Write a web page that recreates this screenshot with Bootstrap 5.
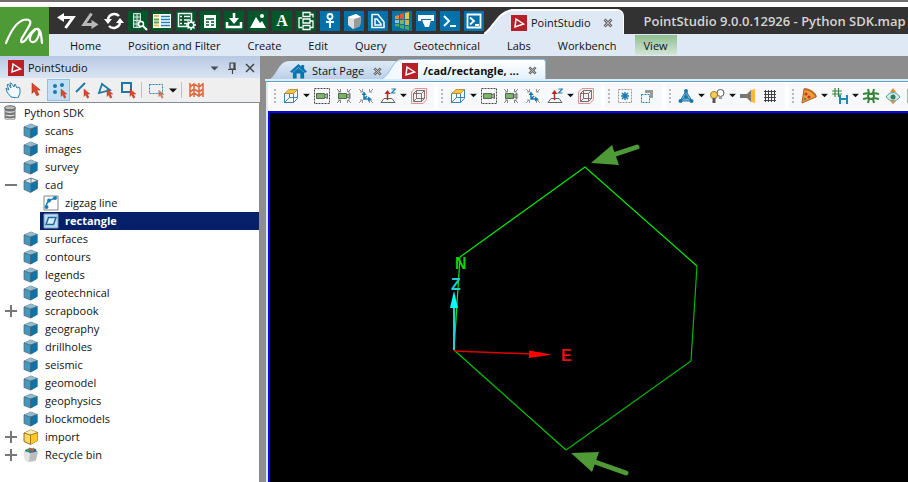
<!DOCTYPE html>
<html lang="en">
<head>
<meta charset="utf-8">
<meta name="viewport" content="width=device-width, initial-scale=1">
<title>PointStudio 9.0.0.12926 - Python SDK.map</title>
<link href="https://cdn.jsdelivr.net/npm/bootstrap@5.3.0/dist/css/bootstrap.min.css" rel="stylesheet">
<style>
body{font:11px/18px "Open Sans","Noto Sans",sans-serif;color:#111;background:#fff;overflow:hidden}
button{border:0;background:none;padding:0;color:inherit;font:inherit;display:inline-flex;align-items:center;justify-content:center;flex:none}
svg{display:block;flex:none}
a{color:inherit;text-decoration:none}
.top-edge{height:7px;border-top:2px solid #6d6d6d;background:#fff}
.app-logo{width:49px;height:49px;background:#4d9a36}
.title-bar{height:27px;background:#323232}
.quick{padding-left:7px;gap:4px}
.quick button{width:20px;height:20px}
.q-green{background:#00582a}
.q-blue{background:#0072ab}
.serif-a{font:700 16px/20px "Liberation Serif",serif;color:#fff}
.app-tab{height:25px;background:#dfe8f5;border-top:2px solid #fff;border-right:1px solid #fff;border-top-right-radius:7px;padding-right:10px;margin-left:-3px;gap:4px}
.app-title{font-size:13px;font-weight:600;color:#d4d4d4;margin-left:20px}
.menu-bar{height:22px;background:#dfe8f5;padding:0 8px 1px;gap:1px}
.menu-bar a{padding:2px 13px 0;line-height:18px}
.menu-bar a.current{margin:0 4px;padding:2px 9px 0;background:linear-gradient(#8fbf8f,#d3e6d8)}
.side{width:260px;background:#efefef}
.side-head{height:22px;background:linear-gradient(#b7c9e3,#dae4f3);padding:2px 5px 0 8px;gap:4px}
.side-tools{height:25px;padding-left:1px;border-bottom:1px solid #838b93}
.side-tools button{width:23px;height:22px}
.side-tools button.drop{width:12px}
.side-tools .picked{background:#c3dff5;border:1px solid #8cc0ea}
.rule{width:1px;height:16px;margin:0 2px;background:#c0c0c0;flex:none}
.tree{background:#fff;padding-top:1px;border-right:1px solid #8d8d8d}
.tree ul{list-style:none;margin:0;padding:0}
.tree-row{height:18px;padding-left:3px}
.tree-row button,.slot{width:15px;height:15px;margin-right:5px;flex:none}
.tree-row .name{margin-left:6px}
.child{margin-left:40px}
.child.chosen{background:#07206a;color:#fff;font-weight:700}
.split{width:5px;background:#8d8d8d}
.work{background:#8d8d8d}
.doc-tabs{height:25px;padding-left:5px;border-bottom:2px solid #dcecf9}
.doc-tab{height:18px;background:linear-gradient(#dfeaf6,#b9d0ea);gap:5px;padding:2px 20px 0 0}
.doc-slope{margin-left:-20px;z-index:1}
.doc-tab.front{height:20px;background:linear-gradient(#fff,#e3f1fc);border-top:1px solid #8cc0e4;border-right:1px solid #8cc0e4;border-top-right-radius:3px;font-weight:700;padding-right:8px}
.doc-frame{border-top:1px solid #5f9fc9;border-left:1px solid #5f9fc9;background:#fff;box-shadow:inset 2px 0 #d5e9f8}
.view-tools{height:29px;padding:0 0 2px 5px;gap:4px}
.tool-group{height:26px;background:#f7f8fa;border-radius:3px;padding-left:3px;flex:none}
.tool-group button{width:22px;height:22px}
.tool-group button.drop{width:9px}
.grip{width:2px;height:14px;margin-right:4px;background:repeating-linear-gradient(#b9b9b9 0 2px,transparent 2px 4px)}
.viewport{background:#000;border-left:2px solid #00f;border-top:2px solid #00f;margin-left:2px;min-height:0}
.viewport text{font:700 16px "Liberation Sans",sans-serif}
</style>
<script src="https://cdn.jsdelivr.net/npm/bootstrap@5.3.0/dist/js/bootstrap.bundle.min.js"></script>
</head>
<body class="vh-100 d-flex flex-column">
<svg width="0" height="0" class="position-absolute" aria-hidden="true">
<defs>
<symbol id="cube" viewBox="0 0 16 16"><path d="M8 1l6 2.500v8L7.500 15 1 12.500V4z" fill="#4796bb" stroke="#55646c" stroke-width=".7"/><path d="M8 1l6 2.500-6.500 2.500L1 4z" fill="#8ebdd3"/><path d="M14.500 3.500v8L7.500 15.500V6z" fill="#0f73a6"/><path d="M1 4l6.500 2 7-2.500M7.500 6v9" fill="none" stroke="#4b6470" stroke-width=".8"/></symbol>
<symbol id="cubeopen" viewBox="0 0 16 16"><path d="M1 4l6.500 2.500 7-3v8l-7 4-6.500-3z" fill="#4796bb"/><path d="M14.500 3.500v8l-7 4V6.500z" fill="#0f73a6"/><path d="M8 1l6.500 2.500-7 3L1 4z" fill="#dcebf2" stroke="#4b6470" stroke-width=".8"/><path d="M8 1v5.300" stroke="#4b6470" stroke-width=".8"/><path d="M1 4v8.500l6.500 3 7-4v-8" fill="none" stroke="#55646c" stroke-width=".7"/></symbol>
<symbol id="cubeyellow" viewBox="0 0 16 16"><path d="M8 1l6.500 2.500v8l-7 4-6.500-3V4z" fill="#fcd860" stroke="#80611b" stroke-width=".9"/><path d="M8 1l6.500 2.500-7 2.500L1 4z" fill="#ffecab"/><path d="M14.500 3.500v8l-7 4V6z" fill="#fdc72c"/><path d="M1 4l6.500 2 7-2.500M7.500 6v9" fill="none" stroke="#80611b" stroke-width=".8"/></symbol>
<symbol id="database" viewBox="0 0 14 16"><path d="M1 3v10.500c0 2 11 2 11 0V3" fill="#777"/><path d="M2 6.500c2 1 7 1 9 0M2 10c2 1 7 1 9 0M2 13.300c2 1 7 1 9 0" fill="none" stroke="#e2e2e2" stroke-width="1.300"/><ellipse cx="6.500" cy="2.800" rx="5.500" ry="2" fill="#bbb" stroke="#666"/></symbol>
<symbol id="bin" viewBox="0 0 16 16"><path d="M2 3l5-2 6 1 1 3-6 2-6-2z" fill="#19799f"/><path d="M6 1l3 3M11 1l-2 3" stroke="#e55226" stroke-width="1.500"/><path d="M4 2l2 3" stroke="#55a541" stroke-width="1.500"/><path d="M1 4l6 2 8-1.500-2 9L6 15l-4-2z" fill="#bdbdbd"/><path d="M1 4l6 2-1 9-4-2z" fill="#e4e4e4"/></symbol>
<symbol id="plus" viewBox="0 0 14 14"><path d="M7 1v12M1 7h12" stroke="#777" stroke-width="2"/></symbol>
<symbol id="minus" viewBox="0 0 14 14"><path d="M1 7h12" stroke="#777" stroke-width="2"/></symbol>
<symbol id="zigzag" viewBox="0 0 16 16"><path d="M1 1h14v14H1z" fill="#fff" stroke="#858585"/><path d="M3.500 12V9L6 5.500 12 3" fill="none" stroke="#247fb0" stroke-width="1.500"/><circle cx="3.500" cy="12" r="2" fill="#1680ba"/><circle cx="6" cy="5.500" r="2" fill="#1680ba"/><circle cx="12" cy="3" r="2" fill="#1680ba"/></symbol>
<symbol id="rectobj" viewBox="0 0 16 16"><path d="M1 1h14v14H1z" fill="#bcdcf4" stroke="#7c98ad"/><path d="M5.500 4.500H13L10.500 11.500H3z" fill="#d8ecfa" stroke="#1c6ca4" stroke-width="1.500"/></symbol>
<symbol id="studio" viewBox="0 0 16 16"><path d="M0 0h16v16H0z" fill="#b91f27"/><path d="M5 4l7.500 5L4 12z" fill="none" stroke="#fff" stroke-width="1.500"/></symbol>
<symbol id="close" viewBox="0 0 10 10"><path d="M1.500 1.500l7 7M8.500 1.500l-7 7" stroke="#6c6c6c" stroke-width="3"/><path d="M2 2l6 6M8 2L2 8" stroke="#c7c7c7" stroke-width=".9"/></symbol>
<symbol id="caret" viewBox="0 0 8 5"><path d="M0 .500h8L4 4.500z" fill="#111"/></symbol>
<symbol id="redpointer" viewBox="0 0 8 12"><path d="M1 0v9l2-2 2 4 2-1-2-4h3z" fill="#d9472c" stroke="#a43625" stroke-width=".5"/></symbol>
<symbol id="vcube" viewBox="0 0 16 16"><path d="M1.500 5.500h9v9h-9zM10.500 14.500l4-4v-9M1.500 14.500l5-5h8M6.500 2v7.500" fill="none" stroke="#3985b5"/><path d="M6 1.500h8.500l-4 4h-9z" fill="#fac338" stroke="#ad8738" stroke-width=".8"/></symbol>
<symbol id="fitcam" viewBox="0 0 16 16"><path d="M.500.500h15v15H.500z" fill="none" stroke="#444" stroke-dasharray="2 1"/><path d="M2.500 5.500h8v5h-8z" fill="#79b662" stroke="#58635a"/><path d="M10.500 7l3-1.500v5l-3-1.500" fill="#aaa" stroke="#666"/></symbol>
<symbol id="cornercam" viewBox="0 0 16 16"><path d="M1 1l3 3M2 4h2.500V1M15 1l-3 3M14 4h-2.500V1M1 15l3-3M2 12h2.500v3M15 15l-3-3M14 12h-2.500v3" fill="none" stroke="#8a8a8a"/><path d="M2.500 5.500h8v5h-8z" fill="#79b662" stroke="#58635a"/><path d="M11 7l3-1.500v5L11 9" fill="#aaa" stroke="#666"/></symbol>
<symbol id="corneraxis" viewBox="0 0 16 16"><path d="M1 1l3 3M2 4h2.500V1M15 1l-3 3M14 4h-2.500V1M1 15l3-3M2 12h2.500v3M15 15l-3-3M14 12h-2.500v3" fill="none" stroke="#949494"/><path d="M6 6v5h5M6 11l3-3" fill="none" stroke="#1779b1" stroke-width="1.500"/><path d="M3.500 7L6 3.500 8.500 7zM10 8.500l3.500 2.500-3.500 2.500z" fill="#1779b1"/></symbol>
<symbol id="zaxis" viewBox="0 0 16 16"><path d="M1 14.500h14l-3-4H4z" fill="#f4f4f4" stroke="#666"/><path d="M7.500 12V4" stroke="#b72729" stroke-width="1.500"/><path d="M4.500 6l3-4 3 4z" fill="#b72729"/><path d="M11.500 1h4l-4 4h4" fill="none" stroke="#227eb6" stroke-width="1.200"/></symbol>
<symbol id="wirecube" viewBox="0 0 16 16"><path d="M.500 4L4 .500h11.500v11L12 15.500H.500z" fill="#fbeeee" stroke="#dc9296"/><path d="M2.500 5.500h8v8h-8zM5.500 2.500h8v8h-8zM2.500 5.500l3-3M10.500 5.500l3-3M10.500 13.500l3-3M2.500 13.500l3-3" fill="none" stroke="#666" stroke-width=".9"/></symbol>
<symbol id="house" viewBox="0 0 18 16"><path d="M0 8l9-8 3 3V1h3v4l3 3-2 1.500-7-6-7 6z" fill="#0674ae"/><path d="M3 9l6-5 6 5v6.500h-4V10H7v5.500H3z" fill="#0674ae"/></symbol>
</defs></svg>

<div class="top-edge flex-shrink-0"></div>
<header class="d-flex flex-shrink-0">
<a class="app-logo flex-shrink-0" href="#" aria-label="Home page"><svg width="49" height="49" viewBox="0 0 49 49" fill="none" stroke="#fff" stroke-width="2.200" stroke-linecap="round"><path d="M6 36C10 26 17 13 26 12.500C32 12.500 31 17 28 21L22 31C19 37 24 36 27 31C31 25 35 21 38 22C42 23 41 31 42 36M38 22C41 26 37 36 32 35C28 34 30 27 35 23"/></svg></a>
<div class="flex-grow-1 overflow-hidden">
<div class="title-bar d-flex align-items-end text-nowrap">
<div class="quick d-flex align-items-center align-self-stretch">
<button aria-label="Undo"><svg width="20" height="20" viewBox="0 0 20 20"><path d="M6 6.500h11L9.500 17" fill="none" stroke="#fff" stroke-width="3"/><path d="M1 6.500L8 2v9z" fill="#fff"/></svg></button>
<button aria-label="Redo"><svg width="20" height="20" viewBox="0 0 20 20"><path d="M11.500 2.500L4 13.500h9" fill="none" stroke="#b8b8b8" stroke-width="3"/><path d="M18.500 13.500L11.500 9v9z" fill="#b8b8b8"/></svg></button>
<button aria-label="Refresh"><svg width="20" height="20" viewBox="0 0 20 20"><path d="M4 8a6.500 6.500 0 0 1 11-3M16 12a6.500 6.500 0 0 1-11 3" fill="none" stroke="#fff" stroke-width="2.500"/><path d="M0 8h8l-4 5zM12 12h8l-4-5z" fill="#fff"/></svg></button>
<button class="q-green" aria-label="Search grid"><svg width="20" height="20" viewBox="0 0 20 20"><path d="M5.500 2.500h7v14h-7zM9 2v14M5 6h8M5 9.500h8M5 13h8" fill="#3a7c58" stroke="#d6e5dc"/><circle cx="13" cy="13" r="2.500" fill="#00582a" stroke="#fff" stroke-width="1.500"/><path d="M15 15l4 4" stroke="#fff" stroke-width="2"/></svg></button>
<button class="q-green" aria-label="Table"><svg width="20" height="20" viewBox="0 0 20 20"><path d="M1 3h18v14H1z" fill="#fff"/><path d="M2 5h5M2 14.500h5" stroke="#e3c14a" stroke-width="2"/><path d="M2 8.500h5M2 11.500h5" stroke="#58a344" stroke-width="2"/><path d="M9 5.500h9M9 8.500h9M9 11.500h9M9 14.500h9" stroke="#2581ad" stroke-width="1.500"/></svg></button>
<button class="q-green" aria-label="Table settings"><svg width="20" height="20" viewBox="0 0 20 20"><path d="M2.500 2.500h13v13h-13zM4 5.500h2M8 5.500h6M4 9h2M8 9h6M4 12.500h2M8 12.500h4" fill="none" stroke="#fff" stroke-width="1.500"/><path d="M15 9v10M10 14h10M11.500 10.500l7 7M18.500 10.500l-7 7" stroke="#fff" stroke-width="1.500"/><circle cx="15" cy="14" r="2.800" fill="#00582a" stroke="#fff" stroke-width="1.500"/></svg></button>
<button class="q-green" aria-label="Sheet"><svg width="20" height="20" viewBox="0 0 20 20"><path d="M4 4h12v13H4z" fill="#fff"/><path d="M6 8h8M6 11h3M11 11h3M6 14h3M11 14h3" stroke="#00582a" stroke-width="1.500"/></svg></button>
<button class="q-green" aria-label="Import"><svg width="20" height="20" viewBox="0 0 20 20"><path d="M3 11v5h14v-5M10 2v8" fill="none" stroke="#fff" stroke-width="2.500"/><path d="M5 7h10l-5 6z" fill="#fff"/></svg></button>
<button class="q-green" aria-label="Terrain"><svg width="20" height="20" viewBox="0 0 20 20"><path d="M2 17l6-11 4 6 2-2 4 7z" fill="#fff"/><circle cx="14" cy="5" r="2" fill="#fff"/></svg></button>
<button class="q-green serif-a" aria-label="Text">A</button>
<button class="q-green" aria-label="Workflow"><svg width="20" height="20" viewBox="0 0 20 20"><path d="M7 1.500h7v4H7zM7 8h7v4H7zM7 14.500h7v4H7zM6 7H3v9.500h3M14 10h3v6.500h-3M14 3.500h3v3" fill="none" stroke="#fff" stroke-width="1.300"/></svg></button>
<button class="q-blue" aria-label="Pin"><svg width="20" height="20" viewBox="0 0 20 20"><circle cx="10" cy="5.500" r="2.500" fill="none" stroke="#fff" stroke-width="1.800"/><path d="M10 8v9M6 11h8" stroke="#fff" stroke-width="2"/></svg></button>
<button class="q-blue" aria-label="Block"><svg width="20" height="20" viewBox="0 0 20 20"><path d="M4 6l8-3 5 3-1 9-7 3-5-4z" fill="#ddd"/><path d="M4 6l6 2 7-2-5-3z" fill="#fff"/><path d="M10 8l7-2-1 9-6 3z" fill="#9a9a9a"/></svg></button>
<button class="q-blue" aria-label="Contour"><svg width="20" height="20" viewBox="0 0 20 20"><path d="M4 3.500h6L16 11v5.500H4zM7 8h2l4 5v1H7z" fill="none" stroke="#fff" stroke-width="1.500"/></svg></button>
<button class="q-blue" aria-label="Palette"><svg width="20" height="20" viewBox="0 0 20 20"><path d="M3 5l4-1v4H3z" fill="#e68a3a"/><path d="M8 3l4-1v6H8z" fill="#e95732"/><path d="M13 2l4-1v7h-4z" fill="#ecc92d"/><path d="M3 9h4v3H3z" fill="#8ec4d6"/><path d="M8 9h4v4H8z" fill="#81b35b"/><path d="M13 9h4v5h-4z" fill="#d3b23e"/><path d="M3 13h4v3l-4-1zM8 14h4v4l-4-1zM13 15h4v4l-4-1z" fill="#51a85d"/></svg></button>
<button class="q-blue" aria-label="Print"><svg width="20" height="20" viewBox="0 0 20 20"><path d="M2 4h16v6h-3V8H5v2H2zM6 9h9l-2 7H9z" fill="#fff"/></svg></button>
<button class="q-blue" aria-label="Console"><svg width="20" height="20" viewBox="0 0 20 20"><path d="M4 5l5 5-5 5M10 15h6" fill="none" stroke="#fff" stroke-width="2"/></svg></button>
<button class="q-blue" aria-label="Script window"><svg width="20" height="20" viewBox="0 0 20 20"><path d="M3.500 3.500h13v13h-13zM6 6.500L10 10l-4 3.500M11 14h4" fill="none" stroke="#fff" stroke-width="1.800"/></svg></button>
</div>
<svg width="30" height="25" viewBox="0 0 30 25"><path d="M0 25C10 19 14 1 30 1v24z" fill="#dfe8f5"/><path d="M0 25C10 19 14 1 30 1" fill="none" stroke="#fff" stroke-width="2"/></svg>
<div class="app-tab d-flex align-items-center"><svg width="16" height="16"><use href="#studio"/></svg><span>PointStudio</span><button class="ms-2" aria-label="Close PointStudio"><svg width="10" height="10"><use href="#close"/></svg></button></div>
<div class="app-title align-self-center">PointStudio 9.0.0.12926 - Python SDK.map</div>
</div>
<nav class="menu-bar d-flex align-items-end text-nowrap" aria-label="Main">
<a href="#">Home</a><a href="#">Position and Filter</a><a href="#">Create</a><a href="#">Edit</a><a href="#">Query</a><a href="#">Geotechnical</a><a href="#">Labs</a><a href="#">Workbench</a><a href="#" class="current" aria-current="page">View</a>
</nav>
</div>
</header>
<div class="d-flex flex-grow-1 overflow-hidden">
<aside class="side d-flex flex-column flex-shrink-0">
<div class="side-head d-flex align-items-center"><svg width="16" height="16"><use href="#studio"/></svg><span class="me-auto">PointStudio</span>
<button class="mx-1" aria-label="Panel menu"><svg width="9" height="5" viewBox="0 0 8 5"><use href="#caret" opacity=".7"/></svg></button>
<button aria-label="Pin panel"><svg width="10" height="12" viewBox="0 0 10 12"><path d="M3 1h5v6H3zM1 7.500h8M5.500 8v4M7 1v6" fill="none" stroke="#444" stroke-width="1.200"/></svg></button>
<button class="ms-1" aria-label="Close panel"><svg width="10" height="10" viewBox="0 0 10 10"><path d="M1 1l8 8M9 1L1 9" stroke="#444" stroke-width="1.500"/></svg></button></div>
<div class="side-tools d-flex align-items-center" role="toolbar" aria-label="Selection">
<button aria-label="Pan"><svg width="16" height="16" viewBox="0 0 16 16"><path d="M6 15L2 10 1 6l3 2-2-5 1-1 3 4-1-5h1l3 4 1-3 2 4 2-1 1 2v4l-2 5z" fill="#f2f9fd" stroke="#2c7eac"/></svg></button>
<button aria-label="Select"><svg width="11" height="14"><use href="#redpointer"/></svg></button>
<button class="picked" aria-label="Select points"><svg width="18" height="18" viewBox="0 0 18 18"><circle cx="5" cy="5" r="2" fill="#1d78aa"/><circle cx="12" cy="4" r="2" fill="#1d78aa"/><circle cx="5" cy="11" r="2" fill="#1d78aa"/><use href="#redpointer" x="10" y="8" width="7" height="10"/></svg></button>
<button aria-label="Select edges"><svg width="18" height="18" viewBox="0 0 18 18"><path d="M3 11l9-9" stroke="#1d78aa" stroke-width="2"/><use href="#redpointer" x="10" y="8" width="7" height="10"/></svg></button>
<button aria-label="Select facets"><svg width="18" height="18" viewBox="0 0 18 18"><path d="M6 3l8 6-11 3z" fill="none" stroke="#1d78aa" stroke-width="1.800"/><use href="#redpointer" x="10" y="8" width="7" height="10"/></svg></button>
<button aria-label="Select blocks"><svg width="18" height="18" viewBox="0 0 18 18"><path d="M3 2h9v9H3z" fill="none" stroke="#1d78aa" stroke-width="2"/><use href="#redpointer" x="10" y="8" width="7" height="10"/></svg></button>
<span class="rule"></span>
<button aria-label="Marquee"><svg width="18" height="18" viewBox="0 0 18 18"><path d="M2.500 3.500h13v9h-13z" fill="none" stroke="#2984b3" stroke-dasharray="2 1"/><use href="#redpointer" x="11" y="9" width="6" height="9" opacity=".7"/></svg></button>
<button class="drop" aria-label="Marquee options"><svg width="8" height="5"><use href="#caret"/></svg></button>
<span class="rule"></span>
<button aria-label="Pattern"><svg width="16" height="16" viewBox="0 0 16 16"><path d="M2 1v14M6 1v14M11 1v14M15 1v14M2 5l4-3 5 3 4-3M2 10l4-3 5 3 4-3M2 14l4-3 5 3 4-3" fill="none" stroke="#e16d42" stroke-width="1.600"/></svg></button>
</div>
<nav class="tree flex-grow-1" aria-label="Project tree">
<ul>
<li class="tree-row d-flex align-items-center"><svg width="15" height="16"><use href="#database"/></svg><span class="name">Python SDK</span></li>
<li class="tree-row d-flex align-items-center"><span class="slot"></span><svg width="16" height="16"><use href="#cube"/></svg><span class="name">scans</span></li>
<li class="tree-row d-flex align-items-center"><span class="slot"></span><svg width="16" height="16"><use href="#cube"/></svg><span class="name">images</span></li>
<li class="tree-row d-flex align-items-center"><span class="slot"></span><svg width="16" height="16"><use href="#cube"/></svg><span class="name">survey</span></li>
<li class="tree-row d-flex align-items-center"><button aria-label="Collapse cad"><svg width="14" height="14"><use href="#minus"/></svg></button><svg width="16" height="16"><use href="#cubeopen"/></svg><span class="name">cad</span></li>
<li class="tree-row child d-flex align-items-center"><svg width="16" height="16"><use href="#zigzag"/></svg><span class="name">zigzag line</span></li>
<li class="tree-row child chosen d-flex align-items-center"><svg width="16" height="16"><use href="#rectobj"/></svg><span class="name">rectangle</span></li>
<li class="tree-row d-flex align-items-center"><span class="slot"></span><svg width="16" height="16"><use href="#cube"/></svg><span class="name">surfaces</span></li>
<li class="tree-row d-flex align-items-center"><span class="slot"></span><svg width="16" height="16"><use href="#cube"/></svg><span class="name">contours</span></li>
<li class="tree-row d-flex align-items-center"><span class="slot"></span><svg width="16" height="16"><use href="#cube"/></svg><span class="name">legends</span></li>
<li class="tree-row d-flex align-items-center"><span class="slot"></span><svg width="16" height="16"><use href="#cube"/></svg><span class="name">geotechnical</span></li>
<li class="tree-row d-flex align-items-center"><button aria-label="Expand scrapbook"><svg width="14" height="14"><use href="#plus"/></svg></button><svg width="16" height="16"><use href="#cube"/></svg><span class="name">scrapbook</span></li>
<li class="tree-row d-flex align-items-center"><span class="slot"></span><svg width="16" height="16"><use href="#cube"/></svg><span class="name">geography</span></li>
<li class="tree-row d-flex align-items-center"><span class="slot"></span><svg width="16" height="16"><use href="#cube"/></svg><span class="name">drillholes</span></li>
<li class="tree-row d-flex align-items-center"><span class="slot"></span><svg width="16" height="16"><use href="#cube"/></svg><span class="name">seismic</span></li>
<li class="tree-row d-flex align-items-center"><span class="slot"></span><svg width="16" height="16"><use href="#cube"/></svg><span class="name">geomodel</span></li>
<li class="tree-row d-flex align-items-center"><span class="slot"></span><svg width="16" height="16"><use href="#cube"/></svg><span class="name">geophysics</span></li>
<li class="tree-row d-flex align-items-center"><span class="slot"></span><svg width="16" height="16"><use href="#cube"/></svg><span class="name">blockmodels</span></li>
<li class="tree-row d-flex align-items-center"><button aria-label="Expand import"><svg width="14" height="14"><use href="#plus"/></svg></button><svg width="16" height="16"><use href="#cubeyellow"/></svg><span class="name">import</span></li>
<li class="tree-row d-flex align-items-center"><button aria-label="Expand recycle bin"><svg width="14" height="14"><use href="#plus"/></svg></button><svg width="16" height="16"><use href="#bin"/></svg><span class="name">Recycle bin</span></li>
</ul>
</nav>
</aside>
<div class="split flex-shrink-0"></div>
<main class="work flex-grow-1 d-flex flex-column overflow-hidden">
<div class="doc-tabs d-flex align-items-end flex-shrink-0 text-nowrap">
<svg width="20" height="18" viewBox="0 0 20 18"><defs><linearGradient id="tabfill" x2="0" y2="1"><stop stop-color="#dfeaf6"/><stop offset="1" stop-color="#b9d0ea"/></linearGradient></defs><path d="M0 18C8 13 8 0 20 0v18z" fill="url(#tabfill)"/></svg>
<div class="doc-tab d-flex align-items-center"><svg width="17" height="15" viewBox="0 0 18 16"><use href="#house"/></svg><span>Start Page</span><button class="ms-1" aria-label="Close Start Page"><svg width="9" height="9" viewBox="0 0 10 10"><use href="#close"/></svg></button></div>
<svg class="doc-slope" width="20" height="20" viewBox="0 0 20 20"><path d="M0 20C10 14 10 .500 20 .500V20z" fill="#f3f9fe"/><path d="M0 20C10 14 10 .500 20 .500" fill="none" stroke="#8cc0e4"/></svg>
<div class="doc-tab front d-flex align-items-center"><svg width="16" height="16"><use href="#studio"/></svg><span>/cad/rectangle, ...</span><button class="ms-1" aria-label="Close document"><svg width="9" height="9" viewBox="0 0 10 10"><use href="#close"/></svg></button></div>
</div>
<div class="doc-frame d-flex flex-column flex-grow-1 overflow-hidden">
<div class="view-tools d-flex align-items-center flex-shrink-0" role="toolbar" aria-label="View">
<div class="tool-group d-flex align-items-center pe-1"><span class="grip"></span>
<button aria-label="View direction"><svg width="16" height="16"><use href="#vcube"/></svg></button><button class="drop" aria-label="View direction options"><svg width="7" height="5" viewBox="0 0 8 5"><use href="#caret"/></svg></button>
<button aria-label="Fit view"><svg width="16" height="16"><use href="#fitcam"/></svg></button><button aria-label="Zoom extents"><svg width="16" height="16"><use href="#cornercam"/></svg></button><button aria-label="Look at centre"><svg width="16" height="16"><use href="#corneraxis"/></svg></button><button aria-label="Z axis"><svg width="16" height="16"><use href="#zaxis"/></svg></button><button class="drop" aria-label="Axis options"><svg width="7" height="5" viewBox="0 0 8 5"><use href="#caret"/></svg></button><button aria-label="Wireframe"><svg width="16" height="16"><use href="#wirecube"/></svg></button></div>
<div class="tool-group d-flex align-items-center pe-1"><span class="grip"></span>
<button aria-label="Second view direction"><svg width="16" height="16"><use href="#vcube"/></svg></button><button class="drop" aria-label="Second direction options"><svg width="7" height="5" viewBox="0 0 8 5"><use href="#caret"/></svg></button>
<button aria-label="Second fit view"><svg width="16" height="16"><use href="#fitcam"/></svg></button><button aria-label="Second zoom extents"><svg width="16" height="16"><use href="#cornercam"/></svg></button><button aria-label="Second look at centre"><svg width="16" height="16"><use href="#corneraxis"/></svg></button><button aria-label="Second Z axis"><svg width="16" height="16"><use href="#zaxis"/></svg></button><button class="drop" aria-label="Second axis options"><svg width="7" height="5" viewBox="0 0 8 5"><use href="#caret"/></svg></button><button aria-label="Second wireframe"><svg width="16" height="16"><use href="#wirecube"/></svg></button></div>
<div class="tool-group d-flex align-items-center pe-1"><span class="grip"></span>
<button aria-label="Show all"><svg width="16" height="16" viewBox="0 0 16 16"><path d="M1.500 1.500h13v13h-13z" fill="none" stroke="#999" stroke-dasharray="2 1"/><path d="M8 4v8M4 8h8M5 5l6 6M11 5l-6 6" stroke="#1d7db2" stroke-width="1.500"/></svg></button><button aria-label="Invert"><svg width="16" height="16" viewBox="0 0 16 16"><path d="M6 2h8v8h-3V5H6z" fill="#999"/><path d="M2.500 6.500h8v8h-8z" fill="none" stroke="#2384b7" stroke-dasharray="2 1"/></svg></button></div>
<div class="tool-group d-flex align-items-center pe-1"><span class="grip"></span>
<button aria-label="Facets"><svg width="16" height="16" viewBox="0 0 16 16"><path d="M8 3L2 13h12z" fill="#71b2d6" stroke="#277aaa"/><path d="M8 3v6l-6 4M8 9l6 4" stroke="#277aaa" fill="none"/><circle cx="8" cy="3" r="2" fill="#1979ad"/><circle cx="2.500" cy="13" r="2" fill="#1979ad"/><circle cx="13.500" cy="13" r="2" fill="#1979ad"/><circle cx="8" cy="9" r="2" fill="#1979ad"/></svg></button><button class="drop" aria-label="Facet options"><svg width="7" height="5" viewBox="0 0 8 5"><use href="#caret"/></svg></button>
<button aria-label="Lighting"><svg width="16" height="16" viewBox="0 0 16 16"><circle cx="11.500" cy="5" r="3.500" fill="#fff" stroke="#555"/><path d="M10 8v3h3V8" fill="#999"/><circle cx="5" cy="7" r="3.500" fill="#fbce49" stroke="#927a3c"/><path d="M3.500 10h3v5h-3z" fill="#555"/></svg></button><button class="drop" aria-label="Lighting options"><svg width="7" height="5" viewBox="0 0 8 5"><use href="#caret"/></svg></button>
<button aria-label="Headlight"><svg width="16" height="16" viewBox="0 0 16 16"><path d="M0 6h7l4-4v12L7 10H0z" fill="#777"/><path d="M11 2l4-1v14l-4-1z" fill="#fab93a"/></svg></button><button aria-label="Grid"><svg width="16" height="16" viewBox="0 0 16 16"><path d="M3.500 2v12M6.500 2v12M9.500 2v12M12.500 2v12M2 3.500h12M2 6.500h12M2 9.500h12M2 12.500h12" stroke="#444"/></svg></button></div>
<div class="tool-group d-flex align-items-center"><span class="grip"></span>
<button aria-label="Slice"><svg width="16" height="16" viewBox="0 0 16 16"><path d="M3 1c6 0 11 4 12 8L1 15z" fill="#ec9c38" stroke="#b75d25"/><path d="M3 1c6 0 11 4 12 8" fill="none" stroke="#bd6728" stroke-width="2"/><circle cx="5" cy="6" r="1.500" fill="#ba3623"/><circle cx="8" cy="9" r="1.500" fill="#ba3623"/><circle cx="4" cy="11" r="1.300" fill="#5b8b2e"/></svg></button><button class="drop" aria-label="Slice options"><svg width="7" height="5" viewBox="0 0 8 5"><use href="#caret"/></svg></button>
<button aria-label="Save grid"><svg width="16" height="16" viewBox="0 0 16 16"><path d="M3 0v9M6.500 0v9M0 3h10M0 6h10" stroke="#398742" stroke-width="1.200"/><path d="M7 7h9v9H7z" fill="#2784b5"/><path d="M9 7h5v3H9zM9 12h5v4H9z" fill="#e8f3f8"/></svg></button><button class="drop" aria-label="Save grid options"><svg width="7" height="5" viewBox="0 0 8 5"><use href="#caret"/></svg></button>
<button aria-label="Section grid"><svg width="16" height="16" viewBox="0 0 16 16"><path d="M5 1l1 4-1 3 1 3-1 4M11 1l-1 4 1 3-1 3 1 4M0 6l5-1 3 1 3-1 5 1M0 11l5-1 3 1 3-1 5 1" fill="none" stroke="#36843a" stroke-width="2"/></svg></button><button aria-label="View section"><svg width="16" height="16" viewBox="0 0 16 16"><path d="M1 9c4-6 10-6 14 0-4 5-10 5-14 0z" fill="#d4ebe5" stroke="#4aa095"/><circle cx="8" cy="9" r="2.500" fill="#327b65"/><path d="M5 4l3-4 3 4zM5 13h6l-3 3z" fill="#e98e36"/></svg></button><button aria-label="Green section"><svg width="16" height="16" viewBox="0 0 16 16"><path d="M1 1h14v14H1z" fill="#69ae62" stroke="#36843a"/></svg></button></div>
</div>
<div class="viewport flex-grow-1">
<svg width="100%" height="100%" viewBox="270 113 638 369" role="img" aria-label="Hexagonal line with axes">
<g fill="none" stroke-width="1.200"><path d="M454 350l6-93 125-90 112 99" stroke="#0e0"/><path d="M697 266l-6 95-125 89" stroke="#00b800"/><path d="M566 450L454 350" stroke="#00cc00"/></g>
<path d="M454 350V305" stroke="#16d5d5" stroke-width="2"/><path d="M450 308l4-17 4 17z" fill="#0ff"/>
<path d="M454 351l78 3" stroke="#e00000" stroke-width="1.500"/><path d="M529 350.500l23 4-23 3.500z" fill="#f00"/>
<text x="455" y="269" fill="#12cf12">N</text><text x="451" y="290" fill="#22ccd5">Z</text><text x="561" y="361" fill="#e11313">E</text>
<g fill="#4d9a36" stroke="#4d9a36"><path d="M637 147l-24 8" stroke-width="5" stroke-linecap="round"/><path d="M591 163l21-18 7 20z" stroke="none"/><path d="M626 473l-31-11" stroke-width="5" stroke-linecap="round"/><path d="M571 453l28-1-7 20z" stroke="none"/></g>
</svg>
</div>
</div>
</main>
</div>
</body>
</html>
